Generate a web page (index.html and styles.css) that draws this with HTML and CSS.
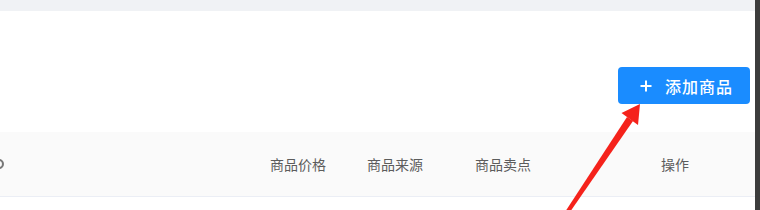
FILE: index.html
```html
<!DOCTYPE html>
<html lang="zh-CN">
<head>
    <meta charset="UTF-8">
    <meta name="viewport" content="width=device-width, initial-scale=1.0">
    <title>商品管理</title>
    <link rel="stylesheet" href="styles.css">
</head>
<body>
    <div class="wrap">
        <div class="main">
            <div class="top-strip"></div>
            <div class="toolbar">
                <button class="btn-add">
                    <svg class="plus" width="12" height="12" viewBox="0 0 12 12">
                        <path d="M6 0.5V11.5M0.5 6H11.5" stroke="#fff" stroke-width="2" fill="none"/>
                    </svg>
                    <span>添加商品</span>
                </button>
            </div>
            <div class="table-head">
                <div class="cell cell-first"><i class="sliver"></i></div>
                <div class="cell">商品价格</div>
                <div class="cell">商品来源</div>
                <div class="cell">商品卖点</div>
                <div class="cell cell-op">操作</div>
            </div>
        </div>
        <div class="edge"></div>
    </div>

    <!-- red annotation arrow drawn over the page -->
    <svg class="arrow" width="760" height="210" viewBox="0 0 760 210">
        <polygon points="565,212 570,212 633,121 627,117" fill="#f5221b"/>
        <polygon points="640,104 621.5,113 638,125" fill="#f5221b"/>
    </svg>
</body>
</html>
```

FILE: styles.css
```css
* {
    margin: 0;
    padding: 0;
    box-sizing: border-box;
}

body {
    font-family: "Noto Sans CJK SC", "Noto Sans", sans-serif;
    background: #fff;
    width: 760px;
    height: 210px;
    overflow: hidden;
    position: relative;
}

.wrap {
    display: flex;
    height: 210px;
}

.main {
    flex: 1;
    min-width: 0;
    overflow: hidden;
}

.edge {
    width: 5px;
    background: #3c3c3c;
}

.top-strip {
    height: 11px;
    background: #f0f2f5;
}

.toolbar {
    display: flex;
    justify-content: flex-end;
    padding: 56px 5px 0 0;
}

.btn-add {
    display: flex;
    align-items: center;
    gap: 13px;
    height: 37px;
    width: 132px;
    padding: 0 0 0 22px;
    background: #1a8cff;
    color: #fff;
    border: none;
    border-radius: 4px;
    font-family: inherit;
    font-size: 16px;
    font-weight: 500;
    letter-spacing: 1px;
    cursor: pointer;
}

.btn-add .plus {
    flex: none;
}

.table-head {
    display: grid;
    grid-template-columns: 258px 97px 108px 186px 1fr;
    align-items: center;
    height: 65px;
    margin-top: 28px;
    background: #fafafa;
    border-bottom: 1px solid #ebeef5;
    font-size: 14px;
    color: #5c5c5c;
}

.cell {
    padding-left: 12px;
    white-space: nowrap;
}

.cell-first {
    padding-left: 0;
    display: flex;
    align-items: center;
}

/* edge of a cut-off column title */
.sliver {
    display: block;
    width: 10px;
    height: 10px;
    margin-left: -6px;
    border: 2px solid #777;
    border-radius: 50%;
}

.arrow {
    position: absolute;
    top: 0;
    left: 0;
    pointer-events: none;
}
```
